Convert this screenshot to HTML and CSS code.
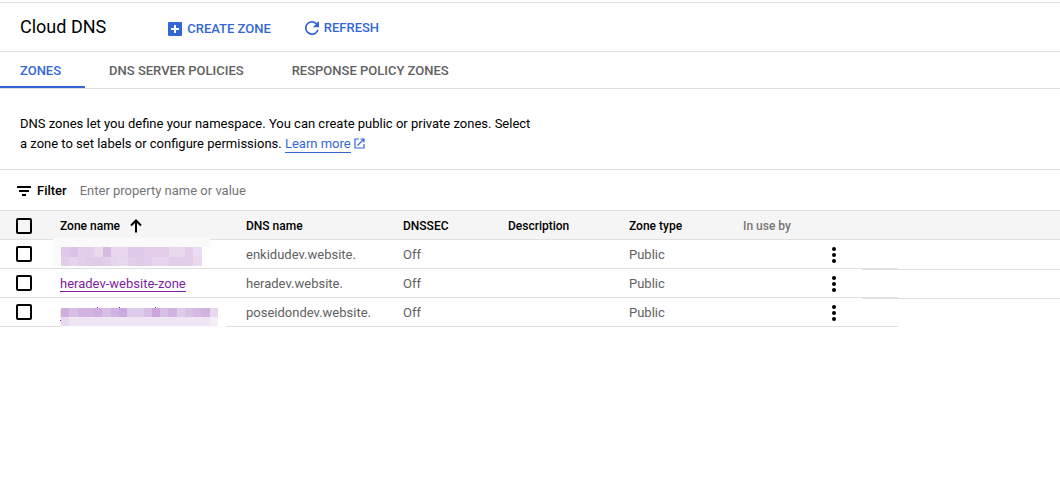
FILE: index.html
```html
<!DOCTYPE html>
<html lang="en">
<head>
<meta charset="utf-8">
<title>Cloud DNS</title>
<link rel="stylesheet" href="styles.css">
</head>
<body>
<header class="toolbar">
  <h1 class="title">Cloud DNS</h1>
  <button class="action create" type="button">
    <svg width="14" height="14" viewBox="0 0 14 14"><rect width="14" height="14" rx="1" fill="#3367d6"/><path d="M6 3h2v3h3v2H8v3H6V8H3V6h3z" fill="#fff"/></svg>
    Create zone
  </button>
  <button class="action refresh" type="button">
    <svg width="14" height="14" viewBox="4 4 16 16"><path fill="#3367d6" d="M17.65 6.35A7.96 7.96 0 0 0 12 4a8 8 0 1 0 7.73 10h-2.08A6 6 0 1 1 12 6c1.66 0 3.14.69 4.22 1.78L13 11h7V4z"/></svg>
    Refresh
  </button>
</header>
<nav class="tabs">
  <a class="tab active" href="#zones">Zones</a>
  <a class="tab" href="#server">DNS server policies</a>
  <a class="tab" href="#response">Response policy zones</a>
</nav>
<main>
  <p class="intro">DNS zones let you define your namespace. You can create public or private zones. Select a zone to set labels or configure permissions. <a class="learn" href="#learn">Learn more</a> <svg class="external" width="11" height="11" viewBox="0 0 11 11" fill="none" stroke="#3367d6" stroke-width="1.2"><path d="M5 1H1v9h9V6M6.500 1H10v3.500M10 1L3.500 7.500"/></svg></p>
  <div class="filter">
    <svg width="14" height="10" viewBox="0 0 14 10"><path d="M0 0h14v2H0zM2 4h10v2H2zM5 8h4v2H5z"/></svg>
    <label for="filter">Filter</label>
    <input id="filter" type="text" placeholder="Enter property name or value">
  </div>
  <table class="zones">
    <colgroup><col class="c-check"><col class="c-name"><col class="c-dns"><col class="c-sec"><col class="c-desc"><col class="c-type"><col class="c-use"><col class="c-menu"><col></colgroup>
    <thead>
      <tr>
        <th><input type="checkbox" aria-label="Select all zones"></th>
        <th>Zone name <svg class="sort" width="12" height="14" viewBox="0 0 12 14" fill="none" stroke="#000" stroke-width="2"><path d="M6 13.500V2M1 6.500l5-5 5 5"/></svg></th>
        <th>DNS name</th><th>DNSSEC</th><th>Description</th><th>Zone type</th><th class="muted">In use by</th><th></th><th></th>
      </tr>
    </thead>
    <tbody>
      <tr>
        <td class="check-cell"><input type="checkbox" aria-label="Select enkidudev.website."></td>
        <td class="masked">
          <svg class="mask mask-first" width="157" height="28" viewBox="53 238 157 28" shape-rendering="crispEdges">
            <path fill="#fafafa" d="M53 238h157v9H53zM53 247h8v19h-8z"/>
            <path fill="#e2ceea" d="M61 247h141v19H61z"/>
            <path fill="#dec8e7" d="M61 247h9v10h-9zM128 247h8v10h-8zM136 247h8v10h-8z"/>
            <path fill="#dac1e5" d="M70 247h8v10h-8z"/>
            <path fill="#e8d9ee" d="M94 247h9v10h-9zM169 247h16v10h-16zM119 257h9v9h-9zM193 257h9v9h-9z"/>
            <path fill="#d8bbe1" d="M103 247h8v10h-8z"/>
            <path fill="#e6d5ec" d="M111 247h17v10h-17zM70 257h8v9h-8zM111 257h8v9h-8zM152 257h17v9h-17z"/>
            <path fill="#eadcf2" d="M193 247h9v10h-9z"/>
            <path fill="#dfcbe8" d="M86 257h17v9H86zM136 257h8v9h-8z"/>
          </svg>
        </td>
        <td>enkidudev.website.</td><td>Off</td><td></td><td>Public</td><td></td>
        <td class="menu-cell"><button class="menu" type="button" aria-label="Zone actions"><svg width="4" height="16" viewBox="0 0 4 16"><circle cx="2" cy="2" r="2"/><circle cx="2" cy="8" r="2"/><circle cx="2" cy="14" r="2"/></svg></button></td>
        <td class="end tail"></td>
      </tr>
      <tr>
        <td class="check-cell"><input type="checkbox" aria-label="Select heradev-website-zone"></td>
        <td><a class="zone" href="#heradev">heradev-website-zone</a></td>
        <td>heradev.website.</td><td>Off</td><td></td><td>Public</td><td></td>
        <td class="menu-cell"><button class="menu" type="button" aria-label="Zone actions"><svg width="4" height="16" viewBox="0 0 4 16"><circle cx="2" cy="2" r="2"/><circle cx="2" cy="8" r="2"/><circle cx="2" cy="14" r="2"/></svg></button></td>
        <td class="end tail"></td>
      </tr>
      <tr>
        <td class="check-cell"><input type="checkbox" aria-label="Select poseidondev.website."></td>
        <td class="masked">
          <svg class="mask mask-last" width="166" height="28" viewBox="60 307 166 28" shape-rendering="crispEdges">
            <path fill="#fafafa" d="M61 326h165v9H61z"/>
            <path fill="#f0e5f4" d="M61 317h149v9H61z"/>
            <path fill="#e8d9f0" d="M61 317h8v9h-8zM210 308h8v9h-8z"/>
            <path fill="#f4eef7" d="M210 317h8v9h-8z"/>
            <path fill="#d6b9e1" d="M61 308h149v9H61z"/>
            <path fill="#cfaddf" d="M61 308h8v9h-8zM94 308h8v9h-8z"/>
            <path fill="#d8c0e5" d="M69 308h9v9h-9zM102 308h9v9h-9zM144 308h8v9h-8zM160 308h8v9h-8zM185 308h8v9h-8z"/>
            <path fill="#d2b3df" d="M78 308h16v9H78zM111 308h8v9h-8zM168 308h9v9h-9zM201 308h9v9h-9z"/>
            <path fill="#c8abdf" d="M119 308h8v9h-8z"/>
            <path fill="#dfcbea" d="M127 308h17v9h-17zM177 308h8v9h-8z"/>
            <path fill="#cca5da" d="M152 308h8v9h-8z"/>
            <path fill="#ffe1cf" d="M60 310h1v9h-1z"/>
            <path fill="#7b1fa2" d="M60 320h1v1h-1zM97 307h1v1h-1zM119 307h1v1h-1zM155 307h1v1h-1z"/>
          </svg>
        </td>
        <td>poseidondev.website.</td><td>Off</td><td></td><td>Public</td><td></td>
        <td class="menu-cell"><button class="menu" type="button" aria-label="Zone actions"><svg width="4" height="16" viewBox="0 0 4 16"><circle cx="2" cy="2" r="2"/><circle cx="2" cy="8" r="2"/><circle cx="2" cy="14" r="2"/></svg></button></td>
        <td class="end"></td>
      </tr>
    </tbody>
  </table>
</main>
</body>
</html>
```
FILE: styles.css
```css
* { box-sizing: border-box; }
body {
  margin: 0;
  padding-top: 2px;
  background: #fff;
  color: #000;
  font: 13px/20px Roboto, sans-serif;
}
button { padding: 0; border: 0; background: none; font: inherit; cursor: pointer; }
.toolbar {
  display: flex;
  align-items: center;
  height: 50px;
  padding: 0 20px;
  border-top: 1px solid #e0e0e0;
  border-bottom: 1px solid #e0e0e0;
}
.title { margin: 0; font-size: 18px; font-weight: 400; line-height: 24px; }
.action {
  display: flex;
  align-items: center;
  gap: 5px;
  color: #3367d6;
  font-weight: 500;
  text-transform: uppercase;
}
.create { margin-left: 62px; padding-top: 3px; }
.refresh { margin-left: 34px; padding-top: 1px; }
.tabs {
  display: flex;
  height: 37px;
  border-bottom: 1px solid #e0e0e0;
}
.tab {
  padding: 9px 24px 0;
  color: #616161;
  font-weight: 500;
  text-decoration: none;
  text-transform: uppercase;
  border-bottom: 2px solid transparent;
}
.tab.active { padding-left: 20px; color: #3367d6; border-color: #3367d6; }
.intro { max-width: 560px; margin: 0; padding: 25px 20px 15px; }
.learn {
  padding-bottom: 1px;
  color: #3367d6;
  text-decoration: none;
  border-bottom: 1px solid #3367d6;
}
.external { vertical-align: -1px; }
.filter {
  display: flex;
  align-items: center;
  height: 42px;
  padding: 1px 17px 0;
  border-top: 1px solid #e0e0e0;
  border-bottom: 1px solid #e0e0e0;
}
.filter label { margin: 0 13px 0 6px; font-weight: 500; }
.filter input {
  flex: 1;
  padding: 0;
  border: 0;
  outline: 0;
  color: #000;
  font: inherit;
}
.filter input::placeholder { color: #757575; opacity: 1; }
.zones { width: 100%; table-layout: fixed; border-collapse: separate; border-spacing: 0; }
.c-check { width: 60px; }
.c-name { width: 186px; }
.c-dns { width: 157px; }
.c-sec { width: 105px; }
.c-desc { width: 121px; }
.c-type { width: 114px; }
.c-use { width: 80px; }
.c-menu { width: 39px; }
th, td {
  height: 29px;
  padding: 2px 0 0;
  text-align: left;
  white-space: nowrap;
  border-bottom: 1px solid #e0e0e0;
}
th { background: #f5f5f5; font-size: 12px; font-weight: 500; }
th.muted { color: #757575; }
td { color: #616161; }
.check-cell, .menu-cell { padding-top: 0; }
input[type="checkbox"] {
  display: block;
  appearance: none;
  width: 16px;
  height: 16px;
  margin: 0 0 0 16px;
  border: 2px solid #000;
  border-radius: 2px;
}
.sort { margin-left: 7px; vertical-align: -3px; }
.zone { color: #7b1fa2; text-decoration: none; border-bottom: 1px solid #7b1fa2; }
.masked { position: relative; }
.mask { position: absolute; }
.mask-first { top: -2px; left: -7px; }
.mask-last { top: 9px; left: 0; }
.menu { display: block; margin-left: 9px; padding-top: 2px; }
.menu svg { display: block; }
.end { position: relative; border-bottom: 0; }
.end::before {
  content: "";
  position: absolute;
  left: 0;
  bottom: 0;
  width: 36px;
  height: 1px;
  background: #e0e0e0;
}
.tail::after {
  content: "";
  position: absolute;
  left: 0;
  right: 0;
  bottom: -1px;
  height: 1px;
  background: #e0e0e0;
}
```
